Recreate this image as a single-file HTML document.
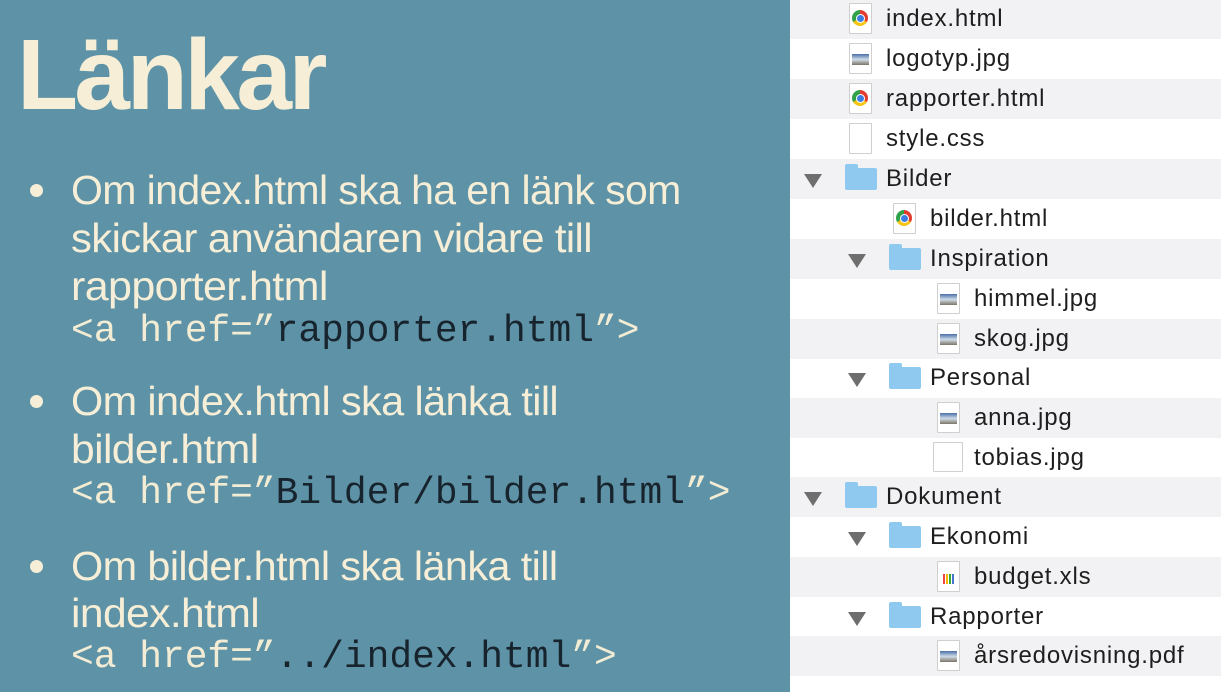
<!DOCTYPE html>
<html><head><meta charset="utf-8"><style>
body{margin:0;width:1221px;height:692px;overflow:hidden;background:#5e93a7;position:relative;font-family:"Liberation Sans",sans-serif}
.t{position:absolute;left:17px;top:20px;font-size:100px;font-weight:bold;color:#f6eed6;letter-spacing:-3.5px;line-height:110px}
.l{position:absolute;left:71px;font-size:41px;color:#f6eed6;white-space:nowrap;line-height:48px;letter-spacing:-0.6px;transform-origin:0 50%}
.c{position:absolute;left:71px;font-family:"Liberation Mono",monospace;font-size:37.9px;color:#f3ecd4;white-space:nowrap;line-height:48px}
.c b{font-weight:normal;color:#17242d}
.d{position:absolute;left:30px;width:13px;height:13px;border-radius:50%;background:#f6eed6}
.p{position:absolute;left:790px;top:0;width:431px;height:692px;background:#fff}
.r{position:absolute;left:0;width:431px;height:40px;font-size:24px;letter-spacing:0.8px;color:#1e1e1e;line-height:40px}
.g{background:#f2f2f4}
.r span{position:absolute;top:0}
.tri{position:absolute;top:15px;width:0;height:0;border-left:9px solid transparent;border-right:9px solid transparent;border-top:14px solid #6e6e6e}
.fo{position:absolute;top:9px;width:32px;height:22px;background:#8fc9ef;border-radius:2px}
.fo:before{content:"";position:absolute;left:0;top:-4px;width:13px;height:5px;background:#8fc9ef;border-radius:2px 2px 0 0}
.fi{position:absolute;top:4px;width:21px;height:29px;background:#fff;border:1px solid #cfcfcf;border-radius:1px}
.ch{position:absolute;left:2px;top:6px;width:16px;height:16px;border-radius:50%;background:conic-gradient(#e33b2e 0 120deg,#f5c518 120deg 240deg,#2fa24a 240deg)}
.ch:after{content:"";position:absolute;left:4.5px;top:4.5px;width:7px;height:7px;border-radius:50%;background:#3b7de0;box-shadow:0 0 0 1px #fff}
.im{position:absolute;left:2px;top:10px;width:17px;height:11px;background:linear-gradient(#4a6fa8,#cfdbe8 50%,#7d7466)}
.xl{position:absolute;left:5px;top:12px;width:11px;height:10px;background:linear-gradient(90deg,#e44 0 2px,transparent 2px 3px,#f5b400 3px 5px,transparent 5px 6px,#3a3 6px 8px,transparent 8px 9px,#47c 9px)}
</style></head><body>
<div class="t">Länkar</div>
<div class="d" style="top:184px"></div>
<div class="l" style="top:166px;transform:scaleX(1.0)">Om index.html ska ha en länk som</div>
<div class="l" style="top:214px;transform:scaleX(1.02)">skickar användaren vidare till</div>
<div class="l" style="top:262px;transform:scaleX(1.05)">rapporter.html</div>
<div class="c" style="top:308px">&lt;a href=”<b>rapporter.html</b>”&gt;</div>
<div class="d" style="top:395px"></div>
<div class="l" style="top:377px;transform:scaleX(1.01)">Om index.html ska länka till</div>
<div class="l" style="top:425px;transform:scaleX(1.04)">bilder.html</div>
<div class="c" style="top:470px">&lt;a href=”<b>Bilder/bilder.html</b>”&gt;</div>
<div class="d" style="top:560px"></div>
<div class="l" style="top:542px;transform:scaleX(1.01)">Om bilder.html ska länka till</div>
<div class="l" style="top:589px;transform:scaleX(1.04)">index.html</div>
<div class="c" style="top:634px">&lt;a href=”<b>../index.html</b>”&gt;</div>

<div class="p">
<div class="r g" style="top:-1px"><div class="fi" style="left:59px"><div class="ch"></div></div><span style="left:96px">index.html</span></div>
<div class="r" style="top:39px"><div class="fi" style="left:59px"><div class="im"></div></div><span style="left:96px">logotyp.jpg</span></div>
<div class="r g" style="top:79px"><div class="fi" style="left:59px"><div class="ch"></div></div><span style="left:96px">rapporter.html</span></div>
<div class="r" style="top:119px"><div class="fi" style="left:59px"></div><span style="left:96px">style.css</span></div>
<div class="r g" style="top:159px"><div class="tri" style="left:14px"></div><div class="fo" style="left:55px"></div><span style="left:96px">Bilder</span></div>
<div class="r" style="top:199px"><div class="fi" style="left:103px"><div class="ch"></div></div><span style="left:140px">bilder.html</span></div>
<div class="r g" style="top:239px"><div class="tri" style="left:58px"></div><div class="fo" style="left:99px"></div><span style="left:140px">Inspiration</span></div>
<div class="r" style="top:279px"><div class="fi" style="left:147px"><div class="im"></div></div><span style="left:184px">himmel.jpg</span></div>
<div class="r g" style="top:319px"><div class="fi" style="left:147px"><div class="im"></div></div><span style="left:184px">skog.jpg</span></div>
<div class="r" style="top:358px"><div class="tri" style="left:58px"></div><div class="fo" style="left:99px"></div><span style="left:140px">Personal</span></div>
<div class="r g" style="top:398px"><div class="fi" style="left:147px"><div class="im"></div></div><span style="left:184px">anna.jpg</span></div>
<div class="r" style="top:438px"><div class="fi" style="left:143px;width:28px;height:28px"></div><span style="left:184px">tobias.jpg</span></div>
<div class="r g" style="top:477px"><div class="tri" style="left:14px"></div><div class="fo" style="left:55px"></div><span style="left:96px">Dokument</span></div>
<div class="r" style="top:517px"><div class="tri" style="left:58px"></div><div class="fo" style="left:99px"></div><span style="left:140px">Ekonomi</span></div>
<div class="r g" style="top:557px"><div class="fi" style="left:147px"><div class="xl"></div></div><span style="left:184px">budget.xls</span></div>
<div class="r" style="top:597px"><div class="tri" style="left:58px"></div><div class="fo" style="left:99px"></div><span style="left:140px">Rapporter</span></div>
<div class="r g" style="top:636px"><div class="fi" style="left:147px"><div class="im"></div></div><span style="left:184px">årsredovisning.pdf</span></div>
</div>
</body></html>
